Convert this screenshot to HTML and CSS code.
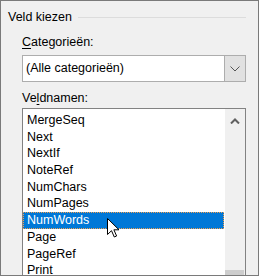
FILE: index.html
```html
<!DOCTYPE html>
<html>
<head>
<meta charset="utf-8">
<link rel="stylesheet" href="styles.css">
</head>
<body>
<div class="window">
  <div class="group-title">
    <span class="title-text">Veld kiezen</span>
    <span class="title-rule"></span>
  </div>
  <div class="section">
    <div class="label label-cat"><u>C</u>ategorieën:</div>
    <div class="combo">
      <span class="combo-text">(Alle categorieën)</span>
      <span class="combo-btn">
        <svg width="10" height="6" viewBox="0 0 10 6"><path d="M0.5 0.5 L5 5 L9.5 0.5" fill="none" stroke="#555" stroke-width="1"/></svg>
      </span>
    </div>
    <div class="label label-names">Ve<u>l</u>dnamen:</div>
    <div class="listbox">
      <ul class="items">
        <li>MergeSeq</li>
        <li>Next</li>
        <li>NextIf</li>
        <li>NoteRef</li>
        <li>NumChars</li>
        <li>NumPages</li>
        <li class="selected">NumWords</li>
        <li>Page</li>
        <li>PageRef</li>
        <li>Print</li>
      </ul>
      <div class="scrollbar">
        <svg class="up-arrow" width="10" height="6" viewBox="0 0 10 6"><path d="M1 5.5 L5 1.5 L9 5.5" fill="none" stroke="#606060" stroke-width="2"/></svg>
        <div class="thumb"></div>
      </div>
      <svg class="cursor" width="13" height="20" viewBox="0 0 13 20"><path d="M0.5 0.5 V16.5 L4.5 12.7 L7.3 19 L9.6 18 L6.9 11.8 H12 Z" fill="#fff" stroke="#000" stroke-width="1" stroke-linejoin="miter"/></svg>
    </div>
  </div>
</div>
</body>
</html>
```

FILE: styles.css
```css
html, body {
  margin: 0;
  padding: 0;
  background: #f0f0f0;
}
.window {
  width: 259px;
  height: 276px;
  box-sizing: border-box;
  border: 1px solid #7a7a7a;
  background: #f0f0f0;
  overflow: hidden;
  font-family: "Liberation Sans", Arial, sans-serif;
  font-size: 12.5px;
  color: #000;
  display: flex;
  flex-direction: column;
}
.group-title {
  display: flex;
  align-items: center;
  margin-top: 9px;
  padding-left: 7px;
  padding-right: 12px;
  line-height: 15px;
  height: 15px;
}
.title-text {
  white-space: nowrap;
}
.title-rule {
  flex: 1;
  height: 1px;
  background: #dcdcdc;
  margin-left: 6px;
}
.section {
  padding-left: 21px;
  padding-right: 12px;
  display: flex;
  flex-direction: column;
}
.label {
  line-height: 15px;
}
.label u {
  text-decoration: underline;
  text-underline-offset: 2px;
}
.label-cat {
  margin-top: 10px;
}
.combo {
  margin-top: 5px;
  height: 27px;
  box-sizing: border-box;
  border: 1px solid #adadad;
  background: #fff;
  display: flex;
  align-items: center;
}
.combo-text {
  flex: 1;
  padding-left: 3px;
  line-height: 25px;
}
.combo-btn {
  width: 21px;
  height: 25px;
  background: #e1e1e1;
  border-left: 1px solid #adadad;
  box-sizing: border-box;
  display: flex;
  align-items: center;
  justify-content: center;
}
.label-names {
  margin-top: 9px;
}
.listbox {
  position: relative;
  margin-top: 2px;
  height: 200px;
  border: 1px solid #828282;
  background: #fff;
  display: flex;
}
.items {
  list-style: none;
  margin: 0;
  padding: 3px 0 0 0;
  flex: 1;
}
.items li {
  height: 16.7px;
  line-height: 16.7px;
  padding-left: 4px;
  margin-right: 1px;
  white-space: nowrap;
}
.items li.selected {
  background: #0078d7;
  color: #fff;
  outline: 1px dotted #f0a050;
  outline-offset: -1px;
}
.scrollbar {
  width: 20px;
  background: #f0f0f0;
  position: relative;
  display: flex;
  flex-direction: column;
  align-items: center;
}
.up-arrow {
  margin-top: 9px;
}
.thumb {
  position: absolute;
  left: 0;
  top: 161px;
  width: 19px;
  height: 40px;
  background: #cdcdcd;
}
.cursor {
  position: absolute;
  left: 84px;
  top: 109px;
}
```
